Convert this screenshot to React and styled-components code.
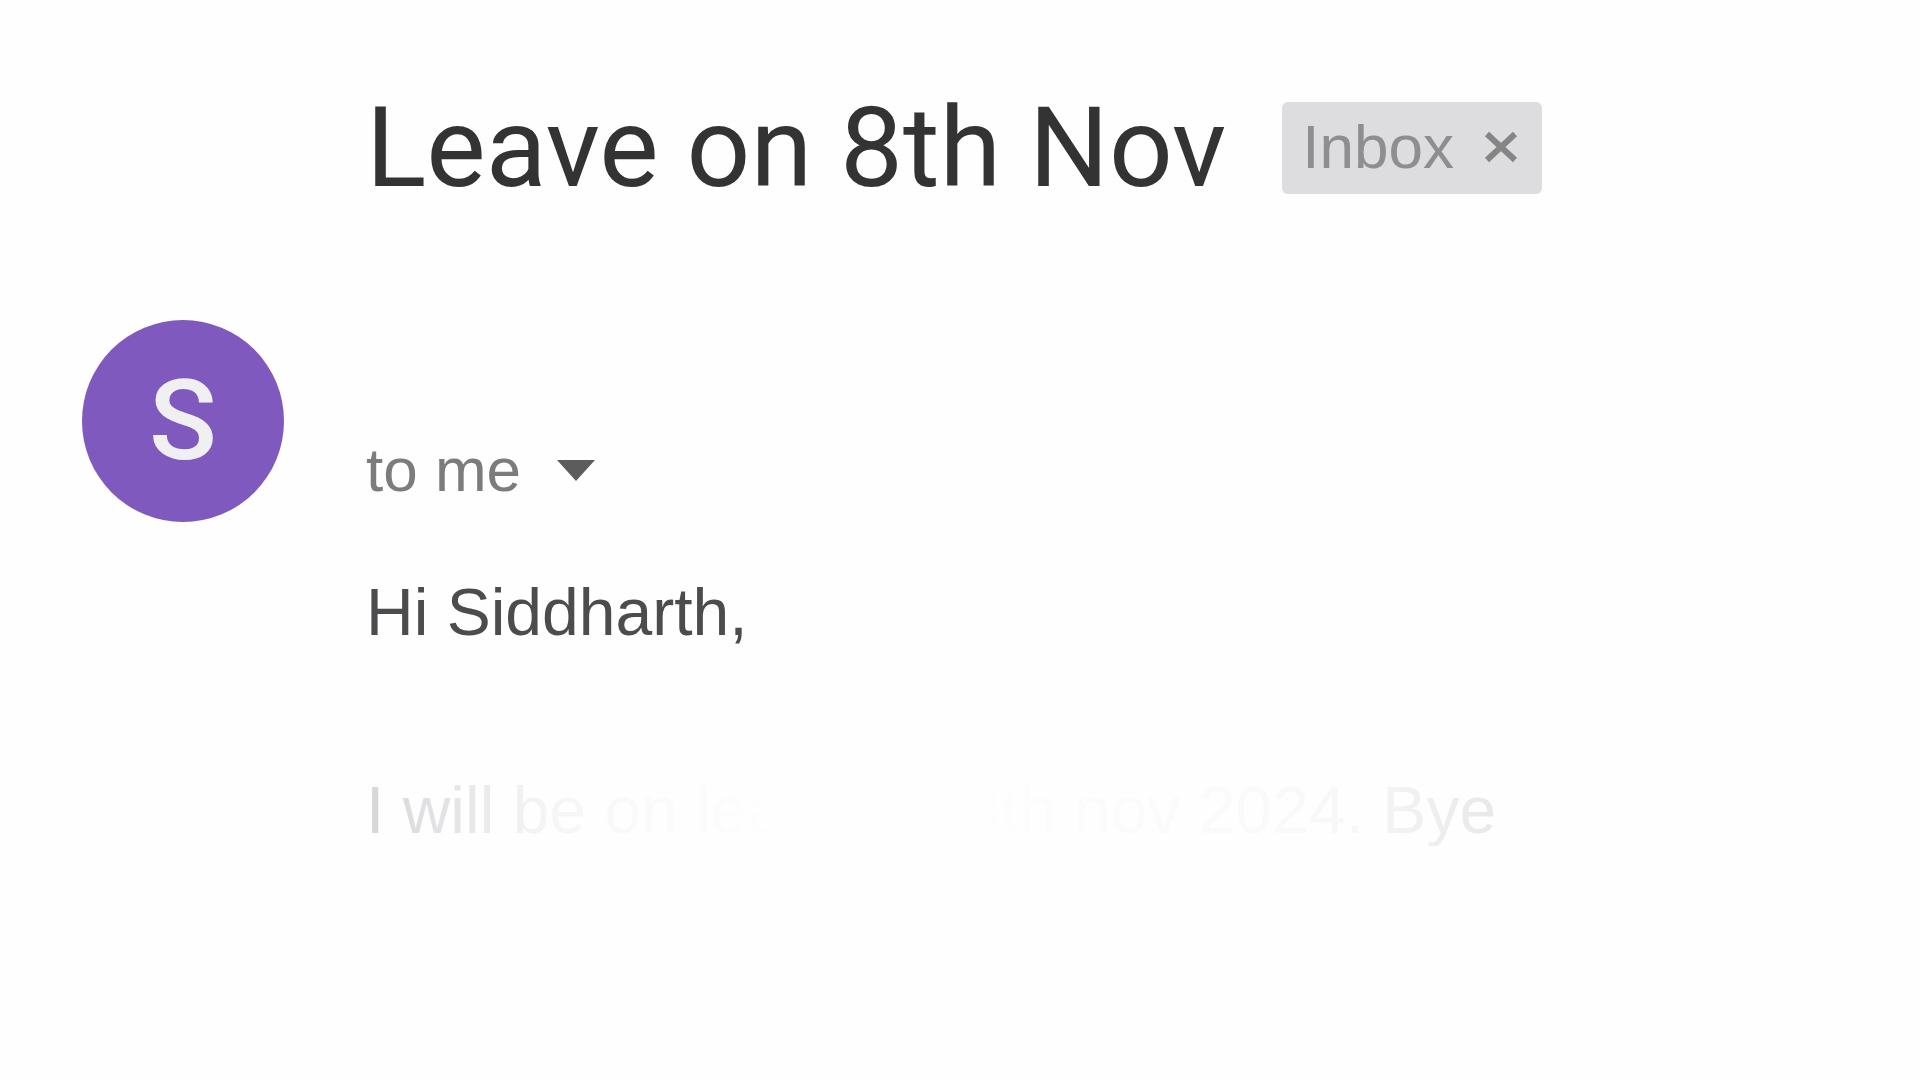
import React from "react";
import styled, { createGlobalStyle } from "styled-components";

const GlobalStyle = createGlobalStyle`
  body {
    margin: 0;
    background-color: #fefefe;
  }

  * {
    box-sizing: border-box;
  }
`;

const MailContainer = styled.main`
  display: grid;
  grid-template-columns: 202px 1fr;
  column-gap: 82px;
  padding: 102px 82px;
  font-family: "Liberation Sans", sans-serif;
  color: #444446;
`;

const SubjectContainer = styled.header`
  grid-column: 2;
  display: flex;
  align-items: flex-start;
  gap: 56px;
  height: 218px;
`;

const Subject = styled.h1`
  margin: 0;
  font-family: "Roboto", sans-serif;
  font-size: 112px;
  font-weight: 400;
  line-height: 92px;
  white-space: nowrap;
  color: #333333;
`;

const LabelContainer = styled.div`
  display: flex;
  align-items: center;
  gap: 30px;
  height: 92px;
  padding: 0 24px 2px 20px;
  border-radius: 6px;
  background-color: #dddddf;
  font-size: 62px;
  line-height: 84px;
  color: #8e8e8e;
`;

const IconButton = styled.button`
  display: flex;
  padding: 0;
  border: none;
  background: none;
  color: ${(props) => props.$color};
  cursor: pointer;
`;

const Avatar = styled.div`
  display: flex;
  align-items: center;
  justify-content: center;
  width: 202px;
  height: 202px;
  border-radius: 50%;
  background-color: #8059bf;
  font-family: "Roboto", sans-serif;
  font-size: 112px;
  font-weight: 500;
  line-height: 112px;
  color: #f0eff2;
`;

const MessageContainer = styled.section`
  padding-top: 114px;
`;

const RecipientContainer = styled.div`
  display: flex;
  align-items: center;
  gap: 36px;
  font-size: 62px;
  line-height: 72px;
  color: #7c7c7e;
`;

const Paragraph = styled.p`
  margin: 70px 0 0;
  font-size: 66px;
  line-height: 72px;
  color: #4c4c4e;
`;

const FadedParagraph = styled(Paragraph)`
  margin-top: 126px;
  width: fit-content;
  white-space: nowrap;
  background-image: linear-gradient(
    90deg,
    #d6d6d9 0%,
    #e9e9eb 10%,
    #f5f5f6 16%,
    #fafafa 24%,
    #fcfcfc 32%,
    #fefefe 38%,
    #fefefe 52%,
    #fcfcfc 60%,
    #fafafa 78%,
    #f7f7f7 88%,
    #f0f0f1 93%,
    #e8e8eb 100%
  );
  background-clip: text;
  color: transparent;
`;

function CloseIcon() {
  return (
    <svg width="34" height="32" viewBox="0 0 34 32" aria-hidden="true">
      <path d="M3 3L31 29M31 3L3 29" stroke="currentColor" strokeWidth="6" />
    </svg>
  );
}

function ArrowIcon() {
  return (
    <svg width="38" height="22" viewBox="0 0 38 22" aria-hidden="true">
      <path d="M0 1H38L19 22Z" fill="currentColor" />
    </svg>
  );
}

export default function App() {
  return (
    <>
      <GlobalStyle />
      <MailContainer>
        <SubjectContainer>
          <Subject>Leave on 8th Nov</Subject>
          <LabelContainer>
            Inbox
            <IconButton $color="#858585" aria-label="Remove label">
              <CloseIcon />
            </IconButton>
          </LabelContainer>
        </SubjectContainer>
        <Avatar>S</Avatar>
        <MessageContainer>
          <RecipientContainer>
            to me
            <IconButton $color="#5c5c5c" aria-label="Show details">
              <ArrowIcon />
            </IconButton>
          </RecipientContainer>
          <Paragraph>Hi Siddharth,</Paragraph>
          <FadedParagraph>I will be on leave on 8th nov 2024. Bye</FadedParagraph>
        </MessageContainer>
      </MailContainer>
    </>
  );
}
